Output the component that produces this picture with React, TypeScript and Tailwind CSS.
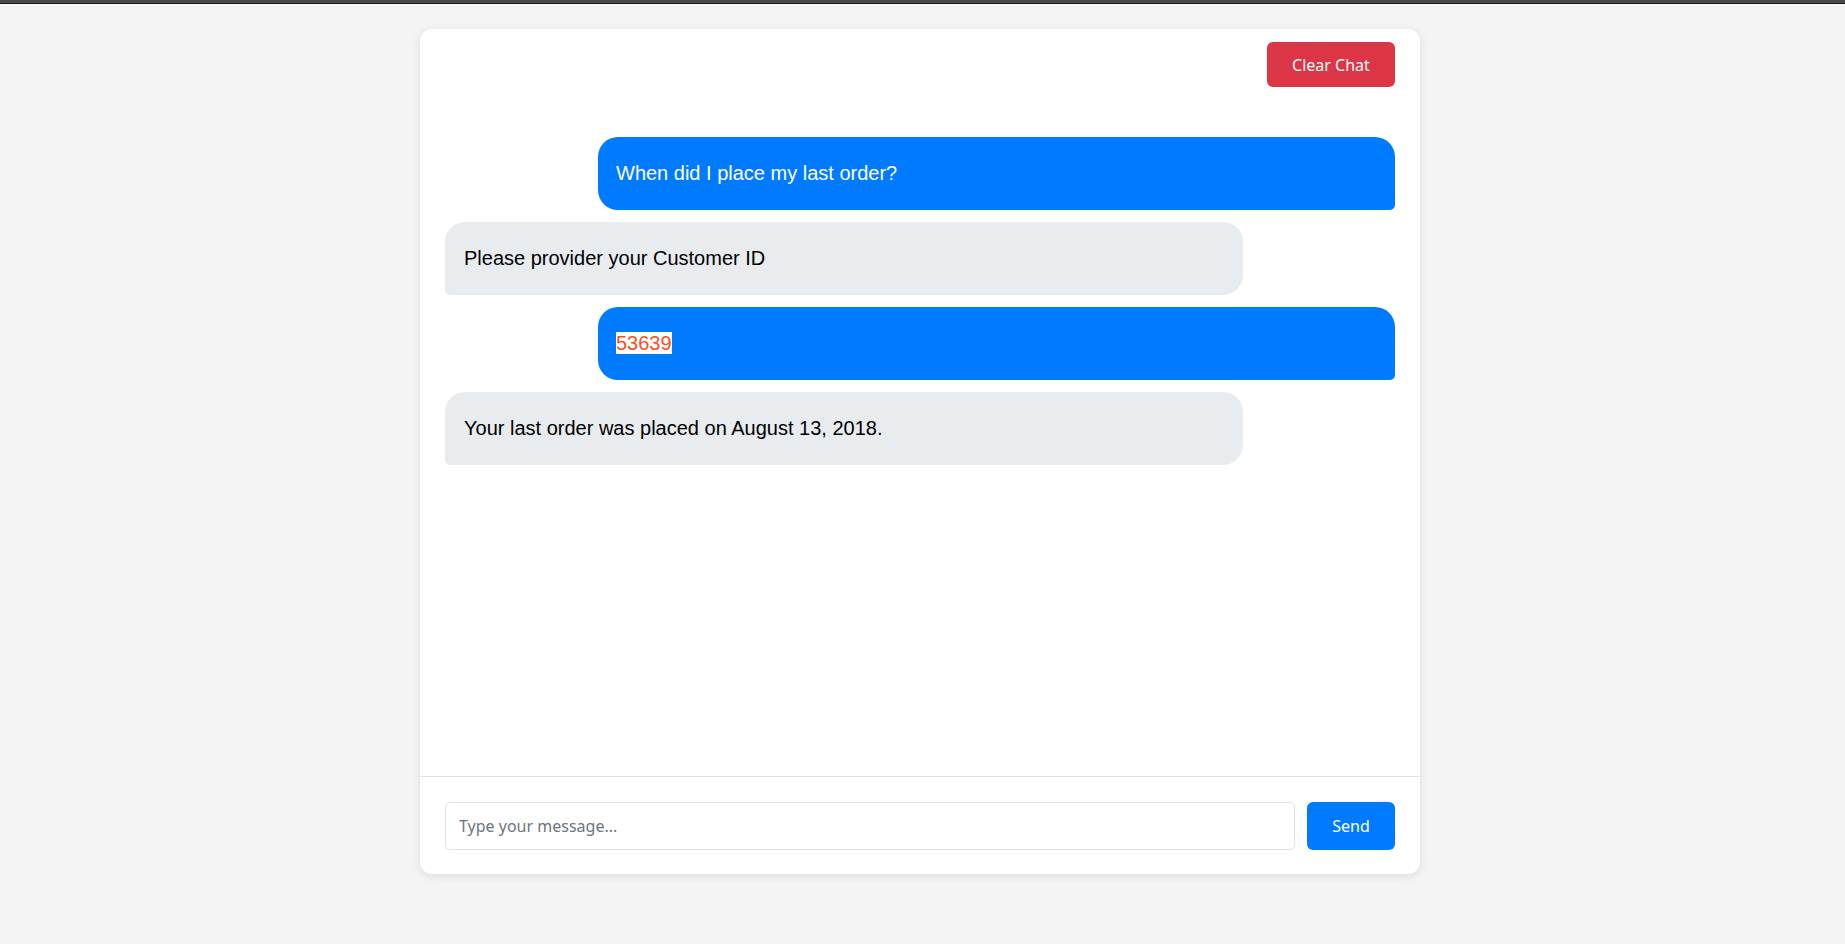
import React, { useState } from "react";

type Msg = { from: "user" | "bot"; text: string; mark?: boolean };

const initial: Msg[] = [
  { from: "user", text: "When did I place my last order?" },
  { from: "bot", text: "Please provider your Customer ID" },
  { from: "user", text: "53639", mark: true },
  { from: "bot", text: "Your last order was placed on August 13, 2018." },
];

export default function App() {
  const [messages, setMessages] = useState<Msg[]>(initial);
  const [draft, setDraft] = useState("");

  const send = () => {
    if (!draft.trim()) return;
    setMessages([...messages, { from: "user", text: draft }]);
    setDraft("");
  };

  return (
    <div className="min-h-screen w-full bg-[#f4f4f4] font-['Noto_Sans',sans-serif]">
      {/* top window strip */}
      <div className="h-[3px] bg-[#484848]" />
      <div className="h-px bg-[#1c1c1c]" />

      <div className="ml-[420px] mt-[25px] flex h-[845px] w-[1000px] flex-col rounded-xl bg-white shadow-[0_2px_10px_rgba(0,0,0,0.1)]">
        {/* header */}
        <div className="flex justify-end px-[25px] pt-[13px]">
          <button
            onClick={() => setMessages([])}
            className="h-[45px] w-[128px] rounded-md bg-[#dc3545] text-[16px] text-white"
          >
            Clear Chat
          </button>
        </div>

        {/* messages */}
        <div className="flex flex-1 flex-col gap-3 overflow-y-auto px-[25px] pt-[50px] font-['Liberation_Sans',Arial,sans-serif] text-[20px]">
          {messages.map((m, i) =>
            m.from === "user" ? (
              <div
                key={i}
                className="ml-auto w-[797px] rounded-[20px] rounded-br-[5px] bg-[#007bff] px-[18px] py-[25px] leading-[23px] text-white"
              >
                {m.mark ? (
                  <span className="bg-white text-[#f4511e]">{m.text}</span>
                ) : (
                  m.text
                )}
              </div>
            ) : (
              <div
                key={i}
                className="mr-auto w-[798px] rounded-[20px] rounded-bl-[5px] bg-[#e9ecef] px-[19px] py-[25px] leading-[23px] text-black"
              >
                {m.text}
              </div>
            )
          )}
        </div>

        {/* input */}
        <div className="flex gap-3 border-t border-[#dee2e6] px-[25px] pb-[24px] pt-[25px]">
          <input
            value={draft}
            onChange={(e) => setDraft(e.target.value)}
            onKeyDown={(e) => e.key === "Enter" && send()}
            placeholder="Type your message..."
            className="h-[48px] flex-1 rounded-[5px] border border-[#dee2e6] px-[13px] text-[16px] text-gray-800 placeholder-[#6c757d] outline-none"
          />
          <button
            onClick={send}
            className="h-[48px] w-[88px] rounded-md bg-[#007bff] text-[16px] text-white"
          >
            Send
          </button>
        </div>
      </div>
    </div>
  );
}
